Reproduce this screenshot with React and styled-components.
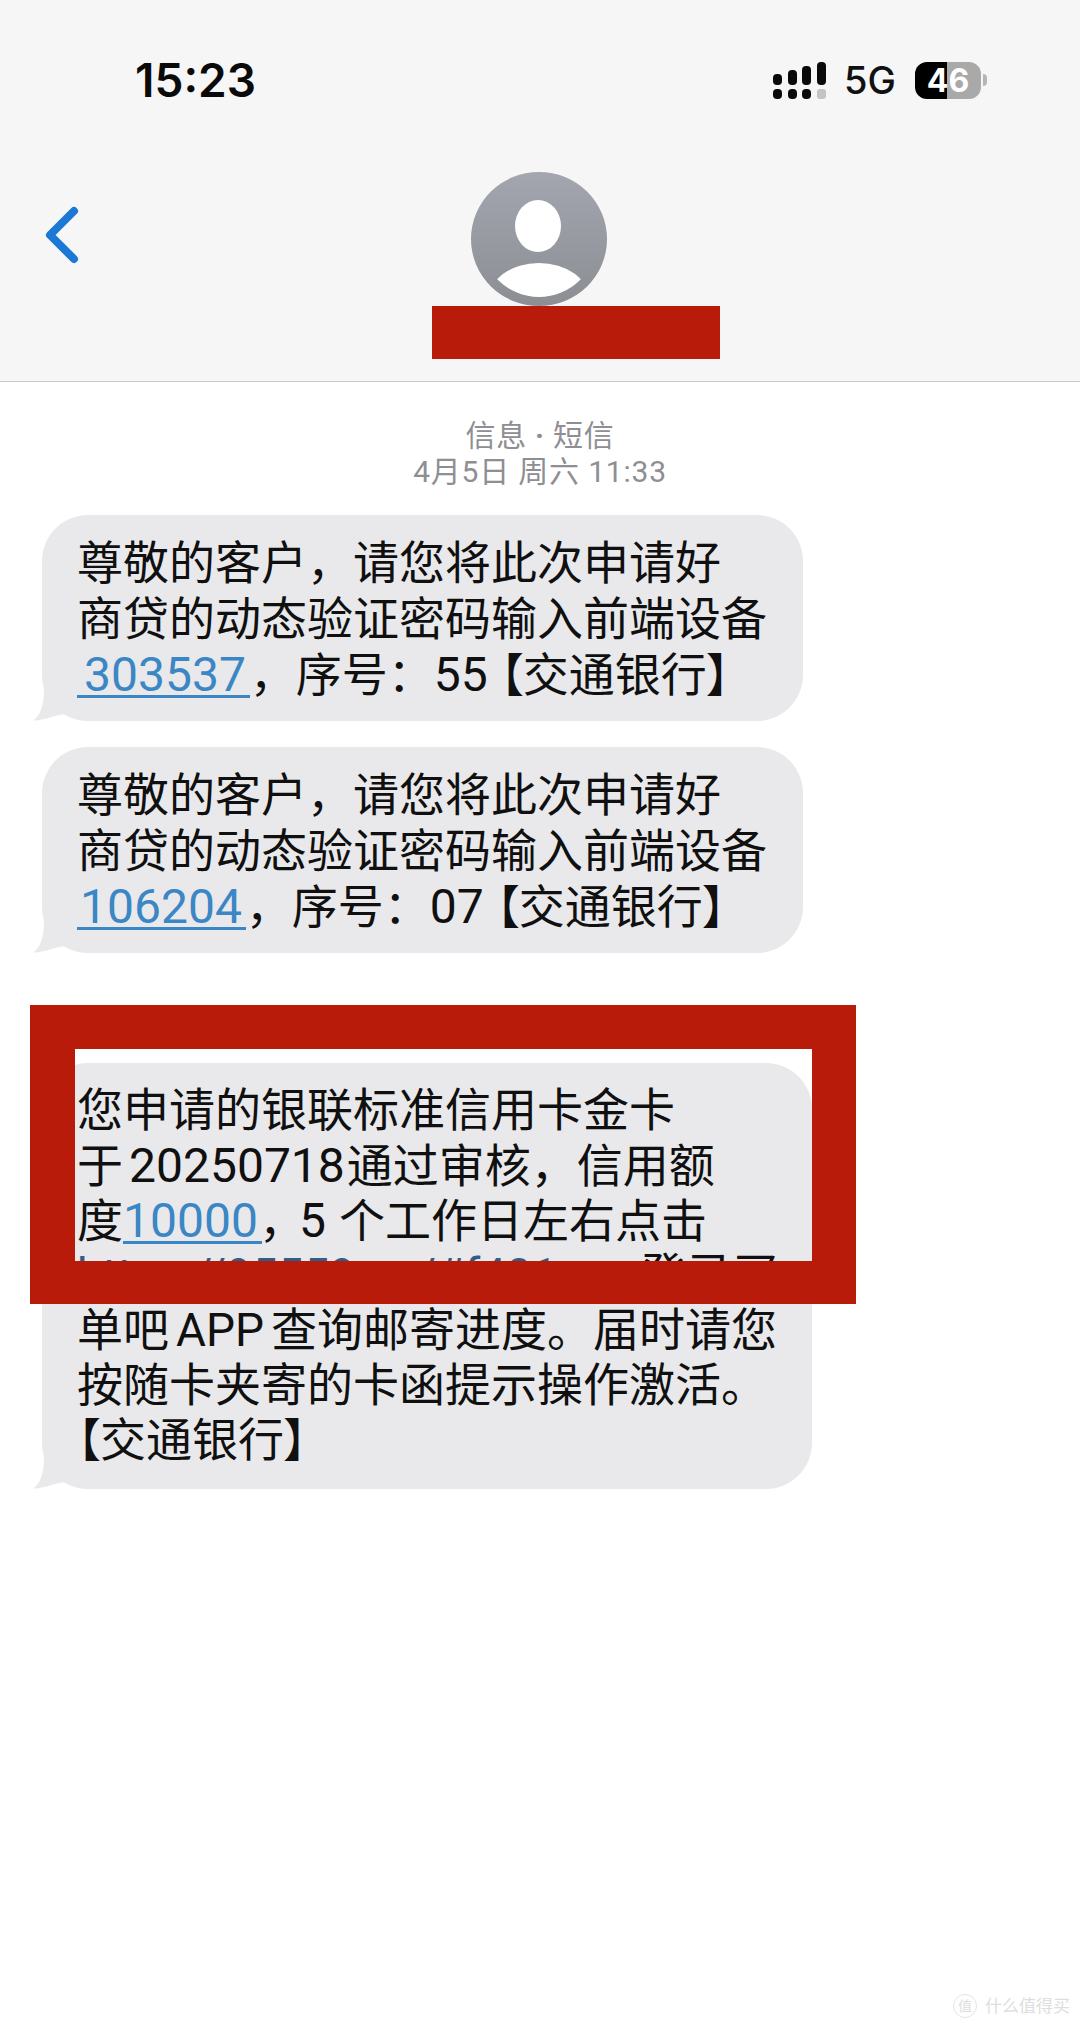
import React from 'react';
import styled, { createGlobalStyle } from 'styled-components';

const GlobalStyle = createGlobalStyle`
  html, body {
    margin: 0;
    padding: 0;
    background: #fff;
  }
  body {
    font-family: Roboto, "Noto Sans CJK SC", sans-serif;
  }
`;

const Page = styled.div`
  position: relative;
  width: 1080px;
  height: 2028px;
  overflow: hidden;
  background: #fff;
`;

const Header = styled.header`
  height: 381px;
  background: #f6f6f6;
  border-bottom: 1px solid #c9c9c9;
`;

const StatusBar = styled.div`
  display: flex;
  align-items: center;
  height: 48px;
  padding: 56px 93px 0 135px;
`;

const Time = styled.div`
  font-family: Inter, sans-serif;
  font-size: 46px;
  font-weight: 600;
  color: #0a0a0a;
`;

const StatusIcons = styled.div`
  display: flex;
  align-items: center;
  margin-left: auto;
`;

const Network = styled.div`
  margin: 0 19px 0 17px;
  font-family: Inter, sans-serif;
  font-size: 38px;
  font-weight: 500;
  color: #111;
`;

const Battery = styled.div`
  position: relative;
  width: 66px;
  height: 37px;
  border-radius: 12px;
  overflow: hidden;
  background: linear-gradient(90deg, #000 48%, #a9a9a9 48%);
  color: #fff;
  font-family: Inter, sans-serif;
  font-size: 32px;
  font-weight: 700;
  line-height: 37px;
  text-align: center;
`;

const BatteryNub = styled.div`
  width: 4px;
  height: 12px;
  margin-left: 2px;
  border-radius: 0 4px 4px 0;
  background: #b5b5b5;
`;

const NavBar = styled.div`
  display: flex;
  align-items: flex-start;
  padding: 68px 0 0 45px;
`;

const BackIcon = styled.svg`
  flex: none;
  width: 34px;
  height: 58px;
  margin-top: 34px;
`;

const Contact = styled.div`
  display: flex;
  flex-direction: column;
  width: 288px;
  margin-left: 353px;
`;

const Avatar = styled.svg`
  display: block;
  width: 136px;
  height: 134px;
  margin-left: 39px;
`;

const RedactedName = styled.div`
  height: 53px;
  background: #b91b0b;
`;

const Thread = styled.main`
  display: flex;
  flex-direction: column;
  align-items: flex-start;
`;

const Caption = styled.div`
  align-self: stretch;
  padding-top: 36px;
  margin-bottom: 25px;
  color: #8e8e93;
  font-size: 30px;
  line-height: 36px;
  letter-spacing: 0.8px;
  text-align: center;
`;

const CaptionDot = styled.span`
  margin: 0 8px;
  font-weight: 700;
`;

const Bubble = styled.div`
  position: relative;
  box-sizing: border-box;
  width: ${({ $width }) => $width}px;
  height: ${({ $height }) => $height}px;
  margin: ${({ $top }) => $top}px 0 0 42px;
  padding: 20px 0 0 35px;
  border-radius: 46px;
  background: #e9e9eb;
  color: #101010;
  font-size: 46px;
  line-height: ${({ $pitch }) => $pitch}px;
  white-space: nowrap;
`;

const Tail = styled.svg`
  position: absolute;
  left: -11px;
  bottom: 0;
  width: 50px;
  height: 40px;
`;

const Line = styled.div`
  height: ${({ $pitch }) => $pitch}px;
`;

const Digits = styled.span`
  display: inline-block;
  font-size: 48px;
  margin-left: ${({ $left }) => $left || 0}px;
  margin-right: ${({ $right }) => $right || 0}px;
`;

const Latin = styled.span`
  margin: 0 7px;
`;

/* palt trims the blank half of the full-width brackets and commas */
const BankTag = styled.span`
  font-feature-settings: "palt";
  margin-left: ${({ $left }) => $left || 0}px;
`;

const Comma = styled.span`
  font-feature-settings: "palt";
  margin-right: ${({ $right }) => $right}px;
`;

const PhoneLink = styled.span`
  display: inline-block;
  height: 40px;
  padding: 0 4px 0 ${({ $inset }) => $inset || 0}px;
  font-size: 48px;
  line-height: 40px;
  color: #3b86c4;
  border-bottom: 3px solid #3b86c4;
`;

const CardLink = styled.span`
  display: inline-block;
  width: ${({ $width }) => $width}px;
  color: #2f5f88;
`;

const RedactionFrame = styled.div`
  position: absolute;
  left: -12px;
  top: -58px;
  box-sizing: border-box;
  width: 826px;
  height: 299px;
  border-style: solid;
  border-color: #b91b0b;
  border-width: 44px 44px 43px 45px;
`;

const Watermark = styled.div`
  position: absolute;
  right: 10px;
  bottom: 10px;
  display: flex;
  align-items: center;
  gap: 8px;
  color: #dedede;
  font-size: 17px;
  line-height: 24px;
`;

const WatermarkBadge = styled.span`
  box-sizing: border-box;
  width: 24px;
  height: 24px;
  border: 1px solid #e4e4e4;
  border-radius: 50%;
  font-size: 14px;
  line-height: 22px;
  text-align: center;
`;

const SignalBars = () => (
  <svg width="54" height="37" viewBox="0 0 54 37">
    <g fill="#0a0a0a">
      <rect x="0" y="12" width="9" height="11" rx="4" />
      <rect x="15" y="8" width="9" height="15" rx="4" />
      <rect x="29" y="4" width="9" height="19" rx="4" />
      <rect x="44" y="0" width="9" height="23" rx="4" />
      <rect x="0" y="27" width="9" height="10" rx="4" />
      <rect x="15" y="27" width="9" height="10" rx="4" />
      <rect x="29" y="27" width="9" height="10" rx="4" />
    </g>
    <rect x="44" y="27" width="9" height="10" rx="3" fill="#c4c4c4" />
  </svg>
);

const BubbleTail = () => (
  <Tail viewBox="0 0 50 40">
    <path d="M2 39.5 C9 36 13 24 13 8 L36 8 L36 33 C26 33 14 39.5 2 39.5 Z" fill="#e9e9eb" />
  </Tail>
);

const App = () => (
  <Page>
    <GlobalStyle />
    <Header>
      <StatusBar>
        <Time>15:23</Time>
        <StatusIcons>
          <SignalBars />
          <Network>5G</Network>
          <Battery>46</Battery>
          <BatteryNub />
        </StatusIcons>
      </StatusBar>
      <NavBar>
        <BackIcon viewBox="0 0 34 58">
          <path d="M29 5 L5 29 L29 53" fill="none" stroke="#1b78d4" strokeWidth="8" strokeLinecap="round" strokeLinejoin="round" />
        </BackIcon>
        <Contact>
          <Avatar viewBox="0 0 136 134">
            <defs>
              <linearGradient id="avatarFill" x1="0" y1="0" x2="0" y2="1">
                <stop offset="0" stopColor="#a3a6af" />
                <stop offset="1" stopColor="#8c8e94" />
              </linearGradient>
              <clipPath id="avatarClip">
                <ellipse cx="68" cy="67" rx="58" ry="58" />
              </clipPath>
            </defs>
            <ellipse cx="68" cy="67" rx="68" ry="67" fill="url(#avatarFill)" />
            <ellipse cx="67" cy="54" rx="23" ry="26" fill="#fff" />
            <ellipse cx="68" cy="127" rx="50" ry="36" fill="#fff" clipPath="url(#avatarClip)" />
          </Avatar>
          <RedactedName />
        </Contact>
      </NavBar>
    </Header>
    <Thread>
      <Caption>
        <div>信息<CaptionDot>·</CaptionDot>短信</div>
        <div>4月5日 周六 11:33</div>
      </Caption>
      <Bubble $width={761} $height={206} $top={0} $pitch={56}>
        <BubbleTail />
        <Line $pitch={56}>尊敬的客户，请您将此次申请好</Line>
        <Line $pitch={56}>商贷的动态验证密码输入前端设备</Line>
        <Line $pitch={56}><PhoneLink $inset={7}>303537</PhoneLink>，序号：<Digits>55</Digits><BankTag $left={12}>【交通银行】</BankTag></Line>
      </Bubble>
      <Bubble $width={761} $height={206} $top={26} $pitch={56}>
        <BubbleTail />
        <Line $pitch={56}>尊敬的客户，请您将此次申请好</Line>
        <Line $pitch={56}>商贷的动态验证密码输入前端设备</Line>
        <Line $pitch={56}><PhoneLink $inset={3}>106204</PhoneLink>，序号：<Digits>07</Digits><BankTag $left={12}>【交通银行】</BankTag></Line>
      </Bubble>
      <Bubble $width={770} $height={426} $top={110} $pitch={55}>
        <BubbleTail />
        <Line $pitch={55}>您申请的银联标准信用卡金卡</Line>
        <Line $pitch={55}>于<Digits $left={6} $right={2}>20250718</Digits>通过审核，信用额</Line>
        <Line $pitch={55}>度<PhoneLink>10000</PhoneLink><Comma $right={14}>，</Comma><Digits $right={13}>5</Digits>个工作日左右点击</Line>
        <Line $pitch={55}><CardLink $width={517}>https://95559.cn/#f401</CardLink>，登录买</Line>
        <Line $pitch={55}>单吧<Latin>APP</Latin>查询邮寄进度。届时请您</Line>
        <Line $pitch={55}>按随卡夹寄的卡函提示操作激活。</Line>
        <Line $pitch={55}><BankTag>【交通银行】</BankTag></Line>
        <RedactionFrame />
      </Bubble>
    </Thread>
    <Watermark>
      <WatermarkBadge>值</WatermarkBadge>
      <span>什么值得买</span>
    </Watermark>
  </Page>
);

export default App;
